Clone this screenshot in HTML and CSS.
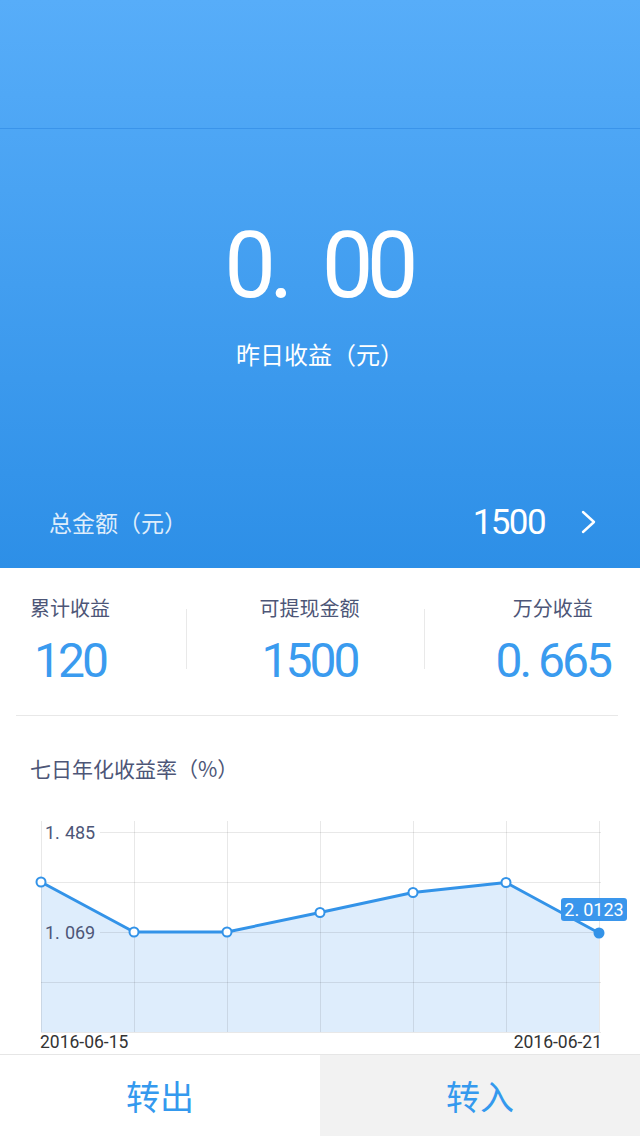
FILE: index.html
```html
<!DOCTYPE html>
<html lang="zh-CN">
<head>
<meta charset="utf-8">
<title>收益</title>
<link rel="stylesheet" href="styles.css">
</head>
<body>
<div class="page">
  <header class="hero">
    <div class="nav"></div>
    <div class="earn">
      <div class="earn-num">0<span class="dot">.</span>00</div>
      <div class="earn-label">昨日收益（元）</div>
    </div>
    <div class="total">
      <span class="total-label">总金额（元）</span>
      <span class="total-right">
        <span class="total-num">1500</span>
        <svg class="chev" width="16" height="24" viewBox="0 0 16 24"><polyline points="2,2 13,12 2,22" fill="none" stroke="#fff" stroke-width="2.4" stroke-linecap="round" stroke-linejoin="round"/></svg>
      </span>
    </div>
  </header>

  <section class="stats">
    <div class="cell cell-left">
      <div class="stat"><div class="stat-label">累计收益</div><div class="stat-num">120</div></div>
    </div>
    <div class="divider"></div>
    <div class="cell cell-mid">
      <div class="stat"><div class="stat-label">可提现金额</div><div class="stat-num">1500</div></div>
    </div>
    <div class="divider"></div>
    <div class="cell cell-right">
      <div class="stat"><div class="stat-label">万分收益</div><div class="stat-num">0<span class="dot-s">.</span>665</div></div>
    </div>
  </section>
  <div class="sep"></div>

  <section class="chart">
    <div class="chart-title">七日年化收益率（%）</div>
    <svg class="chart-svg" width="640" height="254" viewBox="0 0 640 254">
      <polygon points="41,82 134,132 227,132 320,112.5 413,92.5 506,82.5 599,133 599,232 41,232" fill="#deedfc"/>
      <g stroke="rgba(0,0,0,0.09)" stroke-width="1">
        <line x1="100" y1="32.5" x2="601" y2="32.5"/>
        <line x1="41" y1="82.5" x2="601" y2="82.5"/>
        <line x1="100" y1="132.5" x2="601" y2="132.5"/>
        <line x1="41" y1="182.5" x2="601" y2="182.5"/>
        <line x1="41" y1="232.5" x2="601" y2="232.5"/>
        <line x1="41.5" y1="21" x2="41.5" y2="232"/>
        <line x1="134.5" y1="21" x2="134.5" y2="232"/>
        <line x1="227.5" y1="21" x2="227.5" y2="232"/>
        <line x1="320.5" y1="21" x2="320.5" y2="232"/>
        <line x1="413.5" y1="21" x2="413.5" y2="232"/>
        <line x1="506.5" y1="21" x2="506.5" y2="232"/>
        <line x1="599.5" y1="21" x2="599.5" y2="232"/>
      </g>
      <text class="axis-y" x="45" y="38.5">1.<tspan dx="5">485</tspan></text>
      <text class="axis-y" x="45" y="138.5">1.<tspan dx="5">069</tspan></text>
      <polyline points="41,82 134,132 227,132 320,112.5 413,92.5 506,82.5 599,133" fill="none" stroke="#3393e8" stroke-width="3" stroke-linejoin="round"/>
      <g fill="#fff" stroke="#3393e8" stroke-width="2">
        <circle cx="41" cy="82" r="4.5"/>
        <circle cx="134" cy="132" r="4.5"/>
        <circle cx="227" cy="132" r="4.5"/>
        <circle cx="320" cy="112.5" r="4.5"/>
        <circle cx="413" cy="92.5" r="4.5"/>
        <circle cx="506" cy="82.5" r="4.5"/>
      </g>
      <circle cx="599" cy="133" r="5.5" fill="#3393e8"/>
      <rect x="561" y="98" width="66" height="23" rx="3" fill="#3a96ec"/>
      <text class="tip" x="594" y="116" text-anchor="middle">2.<tspan dx="4">0123</tspan></text>
      <text class="axis-x" x="40" y="248">2016-06-15</text>
      <text class="axis-x" x="602" y="248" text-anchor="end">2016-06-21</text>
    </svg>
  </section>

  <footer class="actions">
    <div class="btn btn-out">转出</div>
    <div class="btn btn-in">转入</div>
  </footer>
</div>
</body>
</html>
```

FILE: styles.css
```css
* { box-sizing: border-box; }
html, body { margin: 0; padding: 0; }
body {
  width: 640px;
  height: 1136px;
  overflow: hidden;
  background: #fff;
  font-family: "Noto Sans CJK SC", "Noto Sans", sans-serif;
}
.page {
  width: 640px;
  height: 1136px;
  display: flex;
  flex-direction: column;
}

/* hero */
.hero {
  height: 568px;
  display: flex;
  flex-direction: column;
  background: linear-gradient(180deg, #57adf9 0%, #2d8fe7 100%);
  color: #fff;
}
.nav {
  height: 129px;
  border-bottom: 1px solid #3a94ea;
}
.earn {
  flex: 1;
  display: flex;
  flex-direction: column;
  align-items: center;
  padding-top: 91px;
}
.earn-num {
  font-family: Roboto, "Noto Sans", sans-serif;
  font-size: 92px;
  line-height: 92px;
  letter-spacing: -6.7px;
  padding-right: 4px;
}
.earn-num .dot {
  margin-right: 35px;
}
.earn-label {
  margin-top: 30px;
  font-size: 24px;
  line-height: 24px;
}
.total {
  height: 92px;
  display: flex;
  align-items: center;
  justify-content: space-between;
  padding: 0 43px 0 49px;
}
.total-label {
  font-size: 23px;
  color: rgba(255, 255, 255, 0.86);
}
.total-right {
  display: flex;
  align-items: center;
}
.total-num {
  font-family: Roboto, "Noto Sans", sans-serif;
  font-size: 35px;
  letter-spacing: -1.6px;
}
.chev {
  display: block;
  margin-left: 36px;
}

/* stats */
.stats {
  height: 147px;
  display: flex;
}
.cell {
  display: flex;
  padding-top: 30px;
}
.cell-left { width: 186px; padding-left: 30px; justify-content: flex-start; }
.cell-mid { width: 237px; padding-left: 8px; justify-content: center; }
.cell-right { width: 215px; padding-right: 30px; justify-content: flex-end; }
.divider {
  width: 1px;
  height: 60px;
  margin-top: 41px;
  background: #e9e9e9;
}
.stat {
  display: flex;
  flex-direction: column;
  align-items: center;
}
.stat-label {
  font-size: 20px;
  line-height: 20px;
  color: #4d5677;
}
.stat-num {
  margin-top: 19px;
  font-family: Roboto, "Noto Sans", sans-serif;
  font-size: 48px;
  line-height: 48px;
  letter-spacing: -3px;
  color: #3a9bef;
}
.stat-num .dot-s { margin-right: 9px; }
.sep {
  height: 1px;
  margin: 0 22px 0 16px;
  background: #e8e8e8;
}

/* chart */
.chart {
  padding-top: 42px;
}
.chart-title {
  padding-left: 30px;
  font-size: 21px;
  line-height: 20px;
  color: #4d5677;
}
.chart-svg {
  display: block;
  margin-top: 22px;
}
.axis-y {
  font-family: Roboto, "Noto Sans", sans-serif;
  font-size: 18px;
  fill: #4d5677;
}
.tip {
  font-family: Roboto, "Noto Sans", sans-serif;
  font-size: 18px;
  fill: #fff;
}
.axis-x {
  font-family: Roboto, "Noto Sans", sans-serif;
  font-size: 17.5px;
  fill: #333;
}

/* actions */
.actions {
  flex: 1;
  display: flex;
  border-top: 1px solid #e6e6e6;
}
.btn {
  flex: 1;
  display: flex;
  align-items: center;
  justify-content: center;
  font-size: 34px;
  color: #3499ee;
}
.btn-in {
  background: #f2f2f2;
}
```
